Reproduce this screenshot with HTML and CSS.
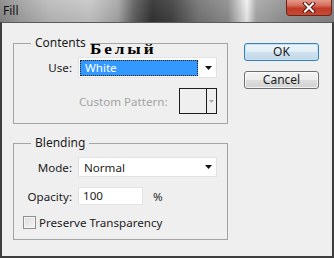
FILE: index.html
```html
<!DOCTYPE html>
<html>
<head>
<meta charset="utf-8">
<title>Fill</title>
<link rel="stylesheet" href="styles.css">
</head>
<body>
<div class="window">
  <div class="titlebar">
    <span class="title">Fill</span>
    <div class="close">
      <svg width="14" height="11" viewBox="0 0 14 11">
        <path d="M3 1.5 L11 9.5 M11 1.5 L3 9.5" stroke="#5a1a10" stroke-width="4" stroke-linecap="square"/>
        <path d="M3 1.5 L11 9.5 M11 1.5 L3 9.5" stroke="#ffffff" stroke-width="2" stroke-linecap="square"/>
      </svg>
    </div>
  </div>
  <div class="client">
    <div class="groups">
      <fieldset class="group contents">
        <legend>Contents</legend>
        <label class="lbl">Use:</label>
        <div class="select">
          <span class="hl">White</span>
          <svg class="arrow" width="7" height="4" viewBox="0 0 7 4"><polygon points="0,0 7,0 3.5,4" fill="#111"/></svg>
        </div>
        <div class="pattern-row">
          <span class="disabled">Custom Pattern:</span>
          <div class="pattern-box">
            <span class="swatch"></span>
            <span class="pbtn"><svg width="5" height="3" viewBox="0 0 5 3"><polygon points="0,0 5,0 2.5,3" fill="#a8a8a8"/></svg></span>
          </div>
        </div>
      </fieldset>
      <fieldset class="group blending">
        <legend>Blending</legend>
        <label class="lbl">Mode:</label>
        <div class="select mode">
          <span class="val">Normal</span>
          <svg class="arrow" width="7" height="4" viewBox="0 0 7 4"><polygon points="0,0 7,0 3.5,4" fill="#111"/></svg>
        </div>
        <label class="lbl">Opacity:</label>
        <div class="opacity-row">
          <span class="input">100</span>
          <span class="pct">%</span>
        </div>
        <div class="check-row">
          <span class="checkbox"></span>
          <span>Preserve Transparency</span>
        </div>
      </fieldset>
      <div class="annotation">Белый</div>
    </div>
    <div class="buttons">
      <div class="btn default">OK</div>
      <div class="btn">Cancel</div>
    </div>
  </div>
</div>
</body>
</html>
```
FILE: styles.css
```css
html, body {
  margin: 0;
  padding: 0;
}
body {
  width: 334px;
  height: 258px;
  overflow: hidden;
  font-family: "Noto Sans", "Open Sans", sans-serif;
  font-size: 11.6px;
  color: #1c1c1c;
}
.window {
  width: 334px;
  height: 258px;
  display: flex;
  flex-direction: column;
  background: #555;
}
.titlebar {
  height: 22px;
  flex: none;
  display: flex;
  align-items: flex-start;
  background:
    linear-gradient(180deg, rgba(255,255,255,0.06), rgba(0,0,0,0.08)),
    linear-gradient(90deg, #8a8a8a 0px, #a2a2a2 20px, #bdbdbd 50px, #c8c8c8 90px, #a8a8a8 118px, #626262 134px, #343434 152px, #444 172px, #767676 198px, #909090 228px, #d8d8d8 242px, #f2f2f2 247px, #aaaaaa 256px, #959595 284px, #878787 334px);
}
.title {
  padding: 3px 0 0 3px;
  line-height: 16px;
  font-size: 12px;
  color: #111;
}
.close {
  margin-left: auto;
  margin-right: 2px;
  width: 46px;
  height: 16px;
  box-sizing: border-box;
  border: 1px solid #6a2418;
  border-top: none;
  border-radius: 0 0 4px 4px;
  background: linear-gradient(180deg, #e59a8c 0%, #d7705f 35%, #c13a28 55%, #c84a36 100%);
  display: flex;
  align-items: center;
  justify-content: center;
  padding-bottom: 1px;
}
.client {
  flex: 1;
  display: flex;
  gap: 16px;
  background: #efefef;
  border: 2px solid #3e3e3e;
  border-top: 1px solid #5a5a5a;
  padding: 12px 12px 0 11px;
}
.groups {
  position: relative;
  width: 215px;
  display: flex;
  flex-direction: column;
  gap: 11px;
}
.group {
  margin: 0;
  min-width: 0;
  border: 1px solid #a4a4a4;
  padding: 6px 10px 9px 9px;
  display: grid;
  grid-template-columns: 49px 139px;
  column-gap: 6px;
  row-gap: 10px;
  align-items: center;
}
.group legend {
  padding: 0 4px;
  margin-left: 8px;
  line-height: 16px;
  font-size: 12px;
}
.lbl {
  text-align: right;
  white-space: nowrap;
}
.select {
  height: 21px;
  box-sizing: border-box;
  background: #fff;
  border: 1px solid #e2e2e2;
  display: flex;
  align-items: center;
  padding: 0 4px 0 1px;
}
.select.mode {
  height: 20px;
  padding-left: 5px;
}
.hl {
  width: 118px;
  height: 16px;
  box-sizing: border-box;
  background: #3399ff;
  color: #fff;
  outline: 1px dotted #222;
  outline-offset: -1px;
  line-height: 16px;
  padding-left: 5px;
}
.arrow {
  margin-left: auto;
}
.pattern-row {
  grid-column: 2;
  display: flex;
  align-items: center;
}
.disabled {
  color: #a3a3a3;
  padding-left: 1px;
}
.pattern-box {
  margin-left: auto;
  width: 38px;
  height: 26px;
  box-sizing: border-box;
  border: 1px solid #1e1e1e;
  display: flex;
}
.swatch {
  width: 26px;
  border-right: 1px solid #1e1e1e;
}
.pbtn {
  flex: 1;
  display: flex;
  align-items: center;
  justify-content: center;
}
.opacity-row {
  display: flex;
  align-items: center;
}
.input {
  width: 65px;
  height: 18px;
  box-sizing: border-box;
  background: #fff;
  border: 1px solid #e2e2e2;
  padding-left: 4px;
  line-height: 16px;
}
.pct {
  margin-left: 10px;
}
.check-row {
  grid-column: 1 / -1;
  display: flex;
  align-items: center;
  gap: 3px;
}
.checkbox {
  width: 13px;
  height: 13px;
  box-sizing: border-box;
  border: 1px solid #8e8f8f;
  background: linear-gradient(135deg, #dcdcdc, #f6f6f6);
  box-shadow: inset 0 0 0 1px #f4f4f4;
}
.annotation {
  position: absolute;
  left: 77px;
  top: 7px;
  font-family: "Liberation Serif", "DejaVu Serif", "Times New Roman", serif;
  font-weight: bold;
  font-size: 15px;
  line-height: 15px;
  letter-spacing: 2.5px;
  color: #000;
  transform: scaleX(1.15);
  transform-origin: left center;
}
.buttons {
  width: 75px;
  margin-top: 8px;
  display: flex;
  flex-direction: column;
  gap: 10px;
}
.btn {
  height: 18px;
  box-sizing: border-box;
  border: 1px solid #707070;
  border-radius: 3px;
  background: linear-gradient(180deg, #f4f4f4 0%, #ececec 48%, #dedede 52%, #d2d2d2 100%);
  box-shadow: inset 0 0 0 1px rgba(255,255,255,0.7);
  text-align: center;
  line-height: 16px;
  font-size: 12px;
}
.btn.default {
  border-color: #3c7fb1;
  background: linear-gradient(180deg, #eef6fb 0%, #e2eef6 48%, #cfe1ee 52%, #c4d8e8 100%);
  box-shadow: inset 0 0 0 1px #bfe3f8;
}
```
